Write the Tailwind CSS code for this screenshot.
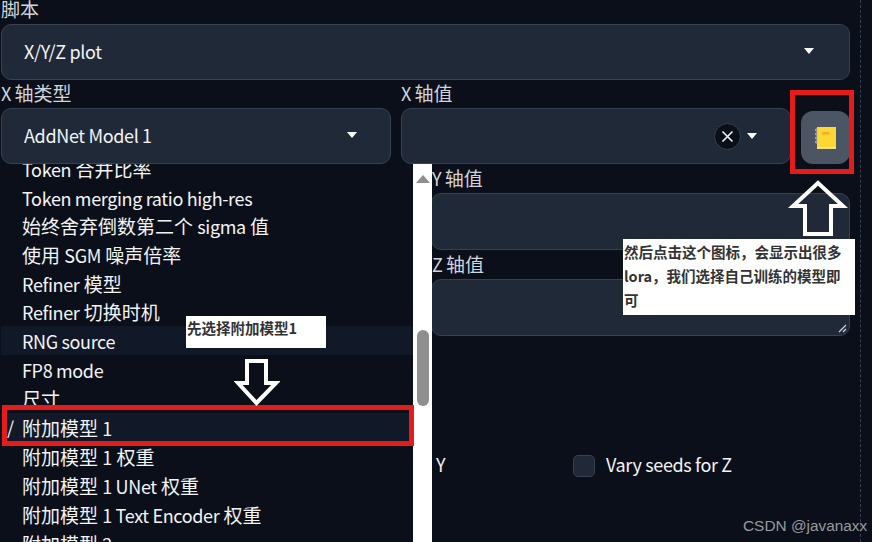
<!DOCTYPE html>
<html lang="zh">
<head>
  <meta charset="utf-8">
  <script src="https://cdn.jsdelivr.net/npm/@tailwindcss/browser@4"></script>
</head>
<body class="m-0 bg-[#0b0f19]">
  <div class="relative w-[872px] h-[542px] overflow-hidden bg-[#0b0f19] font-['Noto_Sans_CJK_SC',sans-serif] text-[19px] text-[#e5e7eb]">
    <div class="w-[849px] ml-[1px]">
      <!-- Script -->
      <div class="h-[24px] leading-[18px] text-[#d1d5db]">脚本</div>
      <div class="h-[56px] flex items-center justify-between pl-[22px] pr-[35px] pb-[2px] bg-[#1f2937] border border-[#374151] rounded-[10px] text-[#f3f4f6]">
        <span class="text-[18px] tracking-[-0.35px]">X/Y/Z plot</span>
        <span class="w-0 h-0 border-x-[5px] border-x-transparent border-t-[6px] border-t-white"></span>
      </div>

      <div class="grid grid-cols-[390px_1fr] gap-x-[10px]">
        <!-- X type -->
        <div>
          <div class="h-[28px] leading-[26px] text-[#d1d5db]"><span class="text-[18px] mr-[-1px]">X</span> 轴类型</div>
          <div class="h-[56px] flex items-center justify-between pl-[22px] pr-[33px] pb-[2px] bg-[#1f2937] border border-[#374151] rounded-[10px] text-[#f3f4f6]">
            <span class="text-[18px] tracking-[-0.35px]">AddNet Model 1</span>
            <span class="w-0 h-0 border-x-[5px] border-x-transparent border-t-[6px] border-t-white"></span>
          </div>
        </div>

        <!-- Axis values -->
        <div>
          <div class="h-[28px] leading-[26px] text-[#d1d5db]"><span class="text-[18px] mr-[-1px]">X</span> 轴值</div>
          <div class="flex gap-[10px] items-end">
            <div class="w-[390px] h-[56px] flex items-center justify-end gap-[6px] pr-[33px] bg-[#1f2937] border border-[#374151] rounded-[10px]">
              <span class="w-[27px] h-[27px] flex items-center justify-center rounded-full bg-[#0b0f19] border border-[#374151]">
                <svg width="13" height="13" viewBox="0 0 13 13"><path d="M1.500 1.500L11.500 11.500M11.500 1.500L1.500 11.500" stroke="#f3f4f6" stroke-width="1.600"/></svg>
              </span>
              <span class="w-0 h-0 border-x-[5px] border-x-transparent border-t-[6px] border-t-white"></span>
            </div>
            <button class="w-[49px] h-[53px] flex items-center justify-center bg-[#4b5563] rounded-[12px]">
              <svg width="21" height="22" viewBox="0 0 21 22">
                <rect x="2" y="0" width="19" height="22" fill="#fdd835"/>
                <rect x="2" y="20" width="19" height="1.500" fill="#e0e0e0"/>
                <rect x="7" y="5" width="7" height="2.500" fill="#ffa726"/>
                <path d="M3 2H0.800V4H3M3 6H0.800V8H3M3 10H0.800V12H3M3 14H0.800V16H3" fill="none" stroke="#bdbdbd" stroke-width="1"/>
              </svg>
            </button>
          </div>
          <div class="ml-[31px] h-[29px] leading-[27px] text-[#d1d5db]"><span class="text-[18px] mr-[-1px]">Y</span> 轴值</div>
          <div class="ml-[30px] h-[57px] bg-[#1f2937] border border-[#374151] rounded-[10px]"></div>
          <div class="ml-[31px] h-[29px] leading-[27px] text-[#d1d5db]"><span class="text-[18px] mr-[-1px]">Z</span> 轴值</div>
          <div class="relative ml-[30px] h-[57px] bg-[#1f2937] border border-[#374151] rounded-[10px]">
            <svg class="absolute right-[2px] bottom-[2px]" width="9" height="9" viewBox="0 0 9 9"><path d="M1 8L8 1M5 8L8 5" stroke="#d1d5db" stroke-width="1.200"/></svg>
          </div>
          <!-- Vary seeds -->
          <div class="mt-[115px] flex items-center">
            <span class="ml-[35px] w-[9px] pb-[2px] text-[18px] text-[#f3f4f6]">Y</span>
            <span class="ml-[128px] w-[22px] h-[22px] bg-[#1f2937] border border-[#374151] rounded-[5px]"></span>
            <span class="ml-[11px] pb-[2px] text-[18px] tracking-[-0.35px] text-[#f3f4f6]">Vary seeds for Z</span>
          </div>
        </div>
      </div>
    </div>

    <!-- Dashed column edge -->
    <div class="absolute left-[860px] top-0 bottom-0 border-l border-dashed border-[#374151]"></div>

    <!-- Open dropdown menu -->
    <div class="absolute left-[1px] top-[164px] w-[431px] h-[378px] flex bg-[#0b0f19]">
      <ul class="w-[412px] overflow-hidden text-[#f3f4f6]">
        <li class="-mt-[10px] h-[29px] leading-[29px] pl-[21px]"><span class="text-[18px] tracking-[-0.35px]">Token</span> 合并比率</li>
        <li class="h-[29px] leading-[29px] pl-[21px]"><span class="text-[18px] tracking-[-0.35px]">Token merging ratio high-res</span></li>
        <li class="h-[28px] leading-[28px] pl-[21px]">始终舍弃倒数第二个 <span class="text-[18px] tracking-[-0.35px]">sigma</span> 值</li>
        <li class="h-[29px] leading-[29px] pl-[21px]">使用 <span class="text-[18px] tracking-[-0.35px]">SGM</span> 噪声倍率</li>
        <li class="h-[29px] leading-[29px] pl-[21px]"><span class="text-[18px] tracking-[-0.35px]">Refiner</span> 模型</li>
        <li class="h-[28px] leading-[28px] pl-[21px]"><span class="text-[18px] tracking-[-0.35px]">Refiner</span> 切换时机</li>
        <li class="h-[29px] leading-[29px] pl-[21px] bg-[#111827]"><span class="text-[18px] tracking-[-0.35px]">RNG source</span></li>
        <li class="h-[29px] leading-[29px] pl-[21px]"><span class="text-[18px] tracking-[-0.35px]">FP8 mode</span></li>
        <li class="h-[29px] leading-[29px] pl-[21px]">尺寸</li>
        <li class="relative h-[29px] leading-[29px] pl-[21px] bg-[#111827]"><span class="absolute left-[6px] text-[18px]">/</span>附加模型 <span class="text-[18px]">1</span></li>
        <li class="h-[29px] leading-[29px] pl-[21px]">附加模型 <span class="text-[18px]">1</span> 权重</li>
        <li class="h-[29px] leading-[29px] pl-[21px]">附加模型 <span class="text-[18px] tracking-[-0.35px]">1 UNet</span> 权重</li>
        <li class="h-[29px] leading-[29px] pl-[21px]">附加模型 <span class="text-[18px] tracking-[-0.35px]">1 Text Encoder</span> 权重</li>
        <li class="h-[29px] leading-[29px] pl-[21px]">附加模型 <span class="text-[18px]">2</span></li>
      </ul>
      <!-- Scrollbar -->
      <div class="relative w-[19px] bg-white">
        <span class="absolute left-[3px] top-[11px] w-0 h-0 border-x-[7px] border-x-transparent border-b-[8px] border-b-[#8f8f8f]"></span>
        <span class="absolute left-[4px] top-[166px] w-[12px] h-[76px] rounded-[6px] bg-[#8f8f8f]"></span>
      </div>
    </div>

    <!-- Annotations -->
    <div class="absolute left-[790px] top-[90px] w-[64px] h-[84px] border-[5px] border-[#e51c1c]"></div>
    <div class="absolute left-[2px] top-[405px] w-[412px] h-[41px] border-[5px] border-[#e51c1c]"></div>

    <svg class="absolute left-[788px] top-[178px]" width="60" height="60" viewBox="0 0 60 60">
      <path d="M30 5L5 28H17V56H43V28H55Z" fill="none" stroke="#fff" stroke-width="4"/>
    </svg>
    <svg class="absolute left-[234px] top-[356px]" width="46" height="52" viewBox="0 0 46 52">
      <path d="M13 5H32V27H42L22.500 47L4 27H13Z" fill="none" stroke="#fff" stroke-width="4"/>
    </svg>

    <div class="absolute left-[186px] top-[316px] w-[140px] h-[32px] bg-white pl-[1px] pt-[2px] font-bold text-[14.500px] leading-[20px] text-[#333]">先选择附加模型1</div>
    <div class="absolute left-[623px] top-[239px] w-[232px] h-[76px] bg-white pl-[1px] pr-[8px] pt-[1px] font-bold text-[14.500px] leading-[24px] text-[#333]">然后点击这个图标，会显示出很多lora，我们选择自己训练的模型即可</div>

    <div class="absolute left-[743px] top-[516px] font-['Liberation_Sans',sans-serif] text-[15.400px] leading-[20px] text-[#979a9f]">CSDN @javanaxx</div>
  </div>
</body>
</html>
